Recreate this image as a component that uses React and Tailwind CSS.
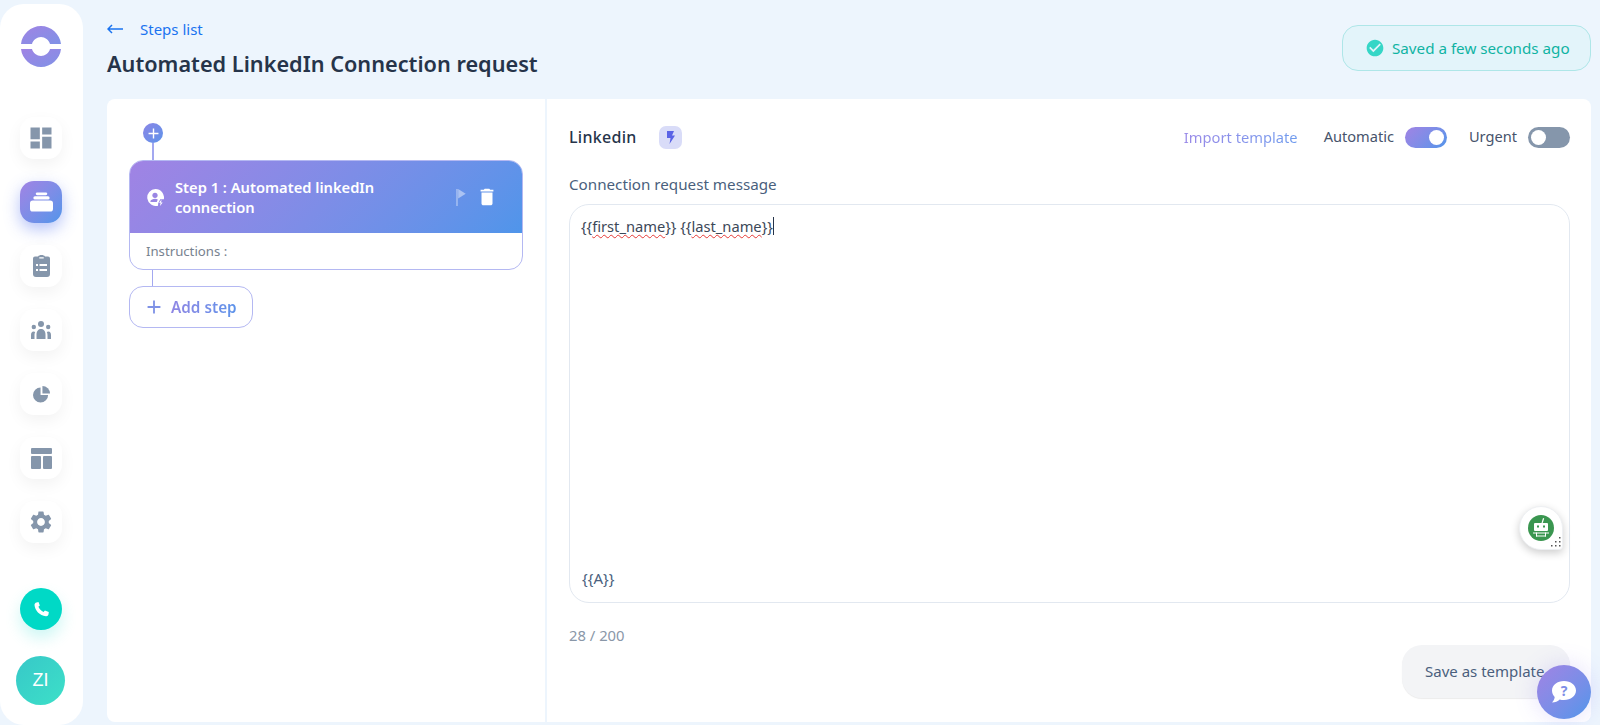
import React from 'react';
import { MdDashboard, MdSettings, MdDelete, MdAdd, MdCheckCircle } from 'react-icons/md';

const gradient = 'bg-linear-135 from-[#a083e4] to-[#4f95ea]';

function StackIcon() {
  return (
    <svg width="23" height="20" viewBox="0 0 24 20" fill="#fff">
      <rect x="6" y="0" width="12" height="3" rx="1.5" />
      <rect x="3.5" y="4" width="17" height="3.5" rx="1.7" />
      <path d="M3 8.5h18a3 3 0 0 1 3 3V17a3 3 0 0 1-3 3H3a3 3 0 0 1-3-3v-5.500a3 3 0 0 1 3-3z" />
    </svg>
  );
}

function ClipboardIcon() {
  return (
    <svg width="17" height="22" viewBox="0 0 17 22" fill="#8596ab">
      <path fillRule="evenodd" d="M2 1.500H5C5.500.5 7 0 8.500 0s3 .5 3.500 1.500h3a2 2 0 0 1 2 2V19a3 3 0 0 1-3 3H3a3 3 0 0 1-3-3V3.500a2 2 0 0 1 2-2zM6.500 2.200a.8.8 0 0 0 0 1.300h4a.8.8 0 0 0 0-1.300h-4zM3 9v2h2V9H3zM6.500 9v2H14V9H6.500zM3 14v2h2v-2H3zM6.500 14v2H14v-2H6.500z" />
    </svg>
  );
}

function GroupIcon() {
  return (
    <svg width="20" height="18" viewBox="0 0 20 18" fill="#8596ab">
      <circle cx="10" cy="3" r="3" />
      <circle cx="2.800" cy="6" r="2.200" />
      <circle cx="17.200" cy="6" r="2.200" />
      <path d="M5.500 18v-4.500C5.500 10 7.500 8 10 8s4.500 2 4.500 5.500V18h-9z" />
      <path d="M0 18v-4c0-2 1-3.500 2.500-3.500.7 0 1.300.2 1.700.5-.5 1-.7 2-.7 3.500v3.500H0z" />
      <path d="M20 18v-4c0-2-1-3.500-2.500-3.500-.7 0-1.300.2-1.700.5.500 1 .7 2 .7 3.500v3.500H20z" />
    </svg>
  );
}

function PieIcon() {
  return (
    <svg width="17" height="17" viewBox="0 0 18 18" fill="#8596ab">
      <path d="M8 1.500V9.500H16A8 8 0 1 1 8 1.500z" />
      <path d="M10 0a8 8 0 0 1 8 8h-8V0z" />
    </svg>
  );
}

function LayoutIcon() {
  return (
    <svg width="21" height="21" viewBox="0 0 21 21" fill="#8596ab">
      <rect x="0" y="0" width="21" height="6" rx="1" />
      <rect x="0" y="8" width="10" height="13" rx="1" />
      <rect x="12" y="8" width="9" height="13" rx="1" />
    </svg>
  );
}

function PhoneIcon() {
  return (
    <svg width="15" height="15" viewBox="0 0 15 15" fill="#fff">
      <path d="M2.500.5L4.500 0l1.300 3.500-1.400 1.200c.8 2.200 2.800 4.300 5.200 5.300l1.300-1.400L14.800 10l-.3 2.300c-.2 1.200-1.300 2.200-2.500 2C5.500 13.500 1 8.500.5 3c-.1-1.200.8-2.200 2-2.500z" />
    </svg>
  );
}

function LogoIcon() {
  return (
    <svg width="40" height="41" viewBox="0 0 40 41">
      <defs>
        <linearGradient id="logoGrad" x1="0" y1="0" x2="1" y2="1">
          <stop offset="0" stopColor="#a083e4" />
          <stop offset="1" stopColor="#7f92e6" />
        </linearGradient>
      </defs>
      <path fill="url(#logoGrad)" d="M0 18C1 8 10 0 20 0s19 8 20 18H29c-1-4-5-7-9-7s-8 3-9 7H0z" />
      <path fill="url(#logoGrad)" d="M0 23h11c1 4 5 7 9 7s8-3 9-7h11c-1 10-10 18-20 18S1 33 0 23z" />
    </svg>
  );
}

function StepUserIcon() {
  return (
    <svg width="17" height="17" viewBox="0 0 17 17" className="shrink-0 mr-[11px]">
      <path fill="#fff" d="M8.500 0a8.500 8.500 0 0 1 8.300 10.300h-3.600l-2 4-.2 2.400A8.500 8.500 0 1 1 8.500 0z" />
      <circle cx="8" cy="6.300" r="2.600" fill="#9a86e4" />
      <path fill="#9a86e4" d="M3 12.500c1-1.800 3-2.700 5-2.700 1 0 2 .2 2.800.6L9.800 13H4.500L3 12.500z" />
      <path fill="#fff" d="M14.500 10.500l-2.500 3.300h1.600L13 17l2.700-3.600h-1.600l.4-2.900z" />
    </svg>
  );
}

function RobotIcon() {
  return (
    <svg width="26" height="26" viewBox="0 0 26 26">
      <circle cx="13" cy="13" r="13" fill="#3a9650" />
      <rect x="6" y="8" width="14" height="8" rx="1" fill="#fff" />
      <rect x="9" y="10.500" width="2" height="2" fill="#3a9650" />
      <rect x="15" y="10.500" width="2" height="2" fill="#3a9650" />
      <path d="M13.500 8l1.500-5 1.200.5-1.500 4.500z" fill="#fff" />
      <rect x="5" y="17.500" width="16" height="1" fill="#fff" />
      <rect x="8" y="17.500" width="1" height="4" fill="#fff" />
      <rect x="17" y="17.500" width="1" height="4" fill="#fff" />
      <rect x="8" y="20.500" width="10" height="1" fill="#fff" />
    </svg>
  );
}

function ResizeDots() {
  return (
    <svg width="10" height="10" viewBox="0 0 10 10" fill="#555" className="absolute right-[1px] bottom-[2px]">
      <rect x="8" y="0" width="1.500" height="1.500" />
      <rect x="4" y="4" width="1.500" height="1.500" />
      <rect x="8" y="4" width="1.500" height="1.500" />
      <rect x="0" y="8" width="1.500" height="1.500" />
      <rect x="4" y="8" width="1.500" height="1.500" />
      <rect x="8" y="8" width="1.500" height="1.500" />
    </svg>
  );
}

function NavButton({ active, children }) {
  return (
    <div
      className={
        active
          ? `w-[42px] h-[42px] rounded-[14px] flex items-center justify-center ${gradient} shadow-[0_6px_16px_rgba(90,120,240,0.45)]`
          : 'w-[42px] h-[42px] rounded-[14px] flex items-center justify-center bg-white shadow-[0_6px_16px_rgba(0,0,0,0.05)]'
      }
    >
      {children}
    </div>
  );
}

function Toggle({ on }) {
  return (
    <div
      className={`w-[42px] h-[21px] rounded-full flex items-center px-[3px] ${on ? `${gradient} justify-end` : 'bg-[#8596ab] justify-start'}`}
    >
      <div className="w-[15px] h-[15px] rounded-full bg-white" />
    </div>
  );
}

export default function App() {
  return (
    <div className="relative flex h-[725px] overflow-hidden bg-[#edf5fd] font-['Noto_Sans',sans-serif]">
      {/* Sidebar */}
      <aside className="w-[83px] shrink-0 mt-[4px] rounded-[24px] bg-white flex flex-col items-center pr-[1px]">
        <div className="mt-[22px] mb-[50px] mr-[1px]">
          <LogoIcon />
        </div>
        <div className="flex flex-col gap-[22px]">
          <NavButton><MdDashboard size={28} color="#8596ab" /></NavButton>
          <NavButton active><StackIcon /></NavButton>
          <NavButton><ClipboardIcon /></NavButton>
          <NavButton><GroupIcon /></NavButton>
          <NavButton><PieIcon /></NavButton>
          <NavButton><LayoutIcon /></NavButton>
          <NavButton><MdSettings size={26} color="#8596ab" /></NavButton>
        </div>
        <div className="mt-[45px] w-[42px] h-[42px] rounded-full bg-[#00d9c6] flex items-center justify-center shadow-[0_8px_16px_rgba(0,217,198,0.2)]">
          <PhoneIcon />
        </div>
        <div className="mt-[26px] mr-[1px] w-[49px] h-[49px] rounded-full bg-linear-135 from-[#37c8c8] to-[#3de0c8] flex items-center justify-center text-white text-[18px] font-['Liberation_Sans',sans-serif]">
          ZI
        </div>
      </aside>

      {/* Main */}
      <main className="flex-1 min-w-0 pl-[24px] pr-[9px] flex flex-col pb-[3px]">
        <header className="h-[99px] shrink-0 flex justify-between">
          <div>
            <div className="mt-[19px] flex items-center text-[15px] leading-[20px] text-[#1a73f0]">
              <svg width="16" height="10" viewBox="0 0 16 10" fill="none" stroke="#1a73f0" strokeWidth="1.500" className="mr-[17px]">
                <path d="M16 5H1M5 1L1 5l4 4" />
              </svg>
              Steps list
            </div>
            <h1 className="mt-[9px] text-[21.700px] leading-[32px] font-semibold text-[#26344a]">
              Automated LinkedIn Connection request
            </h1>
          </div>
          <div className="mt-[25px] h-[46px] w-[249px] rounded-[16px] border border-[#aee6e8] bg-[#e3f4fa] flex items-center pl-[22px] text-[15.200px] text-[#10b3a3]">
            <MdCheckCircle size={20} color="#35d6c6" className="mr-[7px]" />
            Saved a few seconds ago
          </div>
        </header>

        <section className="flex-1 min-h-0 flex rounded-[8px] bg-white overflow-hidden">
          {/* Steps column */}
          <div className="w-[438px] shrink-0 pl-[22px] pr-[22px] pt-[24px]">
            <div className="w-[20px] h-[20px] ml-[14px] rounded-full bg-linear-135 from-[#8a86e6] to-[#5b93ea] flex items-center justify-center">
              <MdAdd size={17} color="#fff" />
            </div>
            <div className="w-[2px] h-[17px] ml-[23px] bg-[#a3a8f0]" />
            <div className="rounded-[14px] border border-[#b4b8f2] overflow-hidden">
              <div className={`h-[72px] flex items-center pl-[17px] pr-[24px] text-white ${gradient}`}>
                <StepUserIcon />
                <div className="w-[240px] text-[14.700px] leading-[20.500px] font-semibold">
                  Step 1 : Automated linkedIn connection
                </div>
                <svg width="10" height="17" viewBox="0 0 10 18" fill="#fff" fillOpacity="0.45" className="ml-auto mr-[10px]">
                  <rect x="0" y="0" width="1.500" height="18" />
                  <path d="M2 0l8 5-8 5z" />
                </svg>
                <MdDelete size={22} color="#fff" />
              </div>
              <div className="h-[36px] pl-[16px] pt-[2px] flex items-center text-[13.200px] text-[#77828f]">
                Instructions :
              </div>
            </div>
            <div className="w-[1px] h-[16px] ml-[23px] bg-[#a3a8f0]" />
            <div className="w-[124px] h-[42px] rounded-[14px] border border-[#b4b8f2] flex items-center pl-[13px]">
              <MdAdd size={22} color="#7f92e6" className="mr-[6px]" />
              <span className="text-[15.300px] font-semibold bg-linear-to-r from-[#8f86e4] to-[#5b93ea] bg-clip-text text-transparent">
                Add step
              </span>
            </div>
          </div>

          {/* Editor column */}
          <div className="flex-1 min-w-0 border-l-2 border-[#edf5fd] pl-[22px] pr-[21px]">
            <div className="mt-[26px] h-[24px] flex items-center">
              <span className="text-[16px] tracking-[0.3px] font-medium text-[#26344a]">Linkedin</span>
              <div className="ml-[22px] w-[23px] h-[23px] rounded-[7px] bg-[#d9dcf8] flex items-center justify-center">
                <svg width="9" height="13" viewBox="0 0 9 13" fill="#5a63e6">
                  <path d="M1 0h7L6 4.500h3L3.500 13 4.500 7H1z" />
                </svg>
              </div>
              <span className="ml-auto text-[14.700px] bg-linear-to-r from-[#9a8ae8] to-[#6f9cee] bg-clip-text text-transparent">
                Import template
              </span>
              <span className="ml-[26px] mr-[11px] text-[14.600px] text-[#47536b]">Automatic</span>
              <Toggle on />
              <span className="ml-[22px] mr-[11px] text-[14.600px] text-[#47536b]">Urgent</span>
              <Toggle />
            </div>

            <div className="mt-[25px] text-[15.200px] leading-[20px] text-[#4a5f7d]">Connection request message</div>

            <div className="relative mt-[10px] h-[399px] rounded-[20px] border border-[#e2e8f0] flex flex-col justify-between pl-[11px] pt-[10px] pb-[14px] pr-[12px]">
              <div className="text-[14.700px] leading-[22px] text-[#3c4858] flex items-center">
                <span>
                  {'{{'}
                  <span className="underline decoration-wavy decoration-[#e53935] decoration-1 underline-offset-[2px]">first_name</span>
                  {'}} {{'}
                  <span className="underline decoration-wavy decoration-[#e53935] decoration-1 underline-offset-[2px]">last_name</span>
                  {'}}'}
                </span>
                <span className="w-[1px] h-[18px] bg-[#26344a]" />
              </div>
              <div className="pl-[1px] text-[15px] leading-[20px] text-[#4a5f7d]">{'{{A}}'}</div>
              <div className="absolute right-[6px] bottom-[52px] w-[44px] h-[44px] rounded-[22px_22px_4px_22px] bg-white border border-[#eef0f3] shadow-[0_3px_8px_rgba(0,0,0,0.2)] flex items-center justify-center">
                <RobotIcon />
                <ResizeDots />
              </div>
            </div>

            <div className="mt-[22px] text-[14.800px] leading-[20px] text-[#8a97a8]">28 / 200</div>

            <div className="flex justify-end">
              <div className="w-[168px] h-[53px] rounded-[20px] bg-[#f3f4f6] shadow-[0_1px_1px_rgba(0,0,0,0.08)] flex items-center pl-[23px] text-[15px] text-[#4a5f7d] whitespace-nowrap">
                Save as template
              </div>
            </div>
          </div>
        </section>
      </main>

      {/* Chat launcher */}
      <div className={`absolute left-[1537px] top-[665px] w-[54px] h-[54px] rounded-full flex items-center justify-center ${gradient} shadow-[0_0_24px_rgba(120,100,240,0.2)]`}>
        <svg width="26" height="24" viewBox="0 0 26 24">
          <path fill="#fff" d="M13 1c6.600 0 12 4 12 9.500S19.600 20 13 20c-1.500 0-3-.2-4.300-.6C7 21 4 22.500 1 22.500c1.500-1.500 2.500-3.500 2.700-5.500C2 15.300 1 13 1 10.500 1 5 6.400 1 13 1z" />
          <text x="13" y="15.500" textAnchor="middle" fontSize="14" fontWeight="700" fill="#7d8ee6" fontFamily="Noto Sans">?</text>
        </svg>
      </div>
    </div>
  );
}
